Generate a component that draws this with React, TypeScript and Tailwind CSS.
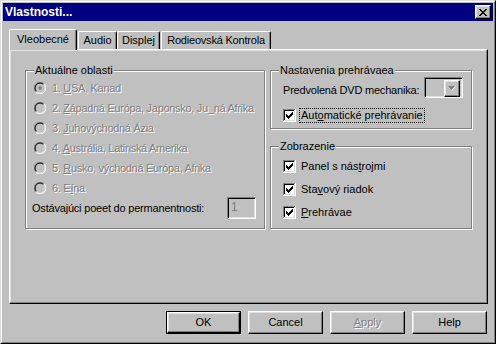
import React from "react";

const font = "font-['Liberation_Sans',Arial,sans-serif]";
const disabledText = "text-[#808080] [text-shadow:1px_1px_0_#fff]";
const raised =
  "border border-t-white border-l-white border-r-black border-b-black bg-[#c0c0c0] shadow-[inset_-1px_-1px_#808080,inset_1px_1px_#dfdfdf]";
const sunken =
  "border border-t-[#808080] border-l-[#808080] border-r-white border-b-white shadow-[inset_1px_1px_#000,inset_-1px_-1px_#dfdfdf]";

function Radio({ checked }: { checked?: boolean }) {
  return (
    <svg width="12" height="12" viewBox="0 0 12 12" className="shrink-0">
      <circle cx="6" cy="6" r="4.5" fill="#c0c0c0" />
      <path d="M1.8 10.2 A5.5 5.5 0 0 1 10.2 1.8" fill="none" stroke="#808080" strokeWidth="1" />
      <path d="M10.2 1.8 A5.5 5.5 0 0 1 1.8 10.2" fill="none" stroke="#fff" strokeWidth="1" />
      <path d="M2.5 9.5 A4.5 4.5 0 0 1 9.5 2.5" fill="none" stroke="#000" strokeWidth="1" />
      <path d="M9.5 2.5 A4.5 4.5 0 0 1 2.5 9.5" fill="none" stroke="#dfdfdf" strokeWidth="1" />
      {checked && <circle cx="6" cy="6" r="1.8" fill="#808080" />}
    </svg>
  );
}

function Check() {
  const cols: [number, number][] = [
    [3, 5], [4, 6], [5, 7], [6, 6], [7, 5], [8, 4], [9, 3],
  ];
  return (
    <svg width="13" height="13" viewBox="0 0 13 13" className="shrink-0" shapeRendering="crispEdges">
      <rect x="0" y="0" width="13" height="13" fill="#fff" />
      <rect x="0" y="0" width="12" height="1" fill="#808080" />
      <rect x="0" y="0" width="1" height="12" fill="#808080" />
      <rect x="1" y="1" width="10" height="1" fill="#000" />
      <rect x="1" y="1" width="1" height="10" fill="#000" />
      <rect x="1" y="11" width="11" height="1" fill="#dfdfdf" />
      <rect x="11" y="1" width="1" height="11" fill="#dfdfdf" />
      {cols.map(([x, y]) => (
        <rect key={x} x={x} y={y} width="1" height="3" fill="#000" />
      ))}
    </svg>
  );
}

function Group({ label, className, children }: { label: string; className: string; children?: React.ReactNode }) {
  return (
    <div className={`relative border border-[#808080] shadow-[1px_1px_0_#fff,inset_1px_1px_0_#fff] ${className}`}>
      <span className="absolute -top-[8px] left-[8px] bg-[#c0c0c0] px-[1px] leading-[14px]">{label}</span>
      {children}
    </div>
  );
}

const regions: [string, string, string][] = [
  ["1. ", "U", "SA, Kanad"],
  ["2. ", "Z", "ápadná Európa, Japonsko, Ju_ná Afrika"],
  ["3. ", "J", "uhovýchodná Ázia"],
  ["4. ", "A", "ustrália, Latinská Amerika"],
  ["5. ", "R", "usko, východná Európa, Afrika"],
  ["6. E", "í", "na"],
];

export default function App() {
  return (
    <div className={`${font} text-[11px] text-black whitespace-nowrap w-[496px] h-[344px] bg-[#c0c0c0] border border-t-[#dfdfdf] border-l-[#dfdfdf] border-r-black border-b-black`}>
      <div className="h-full border border-t-white border-l-white border-r-[#808080] border-b-[#808080] p-px">
        {/* title bar */}
        <div className="h-[18px] bg-[#000080] flex items-center justify-between pl-[2px] pr-[2px]">
          <span className="text-white font-bold text-[12px] leading-none">Vlastnosti...</span>
          <div className={`${raised} w-[16px] h-[14px] flex items-center justify-center`}>
            <svg width="8" height="7" viewBox="0 0 8 7" shapeRendering="crispEdges">
              {[0, 1, 2, 3, 4, 5, 6].map((i) => (
                <React.Fragment key={i}>
                  <rect x={i} y={i} width="2" height="1" fill="#000" />
                  <rect x={6 - i} y={i} width="2" height="1" fill="#000" />
                </React.Fragment>
              ))}
            </svg>
          </div>
        </div>

        {/* tabs */}
        <div className="mt-[8px] ml-[6px] flex items-end h-[20px]">
          <div className="relative z-10 -mb-px w-[68px] h-[21px] bg-[#c0c0c0] border-l border-t border-white border-r border-r-black rounded-t-[2px] shadow-[inset_-1px_0_#808080] flex items-center justify-center pb-[2px]">
            Vleobecné
          </div>
          <div className="ml-px w-[39px] h-[18px] border-l border-t border-white border-r border-r-black rounded-t-[2px] shadow-[inset_-1px_0_#808080] flex items-center justify-center">
            Audio
          </div>
          <div className="w-[43px] h-[18px] border-l border-t border-white border-r border-r-black rounded-t-[2px] shadow-[inset_-1px_0_#808080] flex items-center justify-center">
            Displej
          </div>
          <div className="ml-px w-[110px] h-[18px] border-l border-t border-white border-r border-r-black rounded-t-[2px] shadow-[inset_-1px_0_#808080] flex items-center justify-center tracking-[-0.2px]">
            Rodieovská Kontrola
          </div>
        </div>

        {/* panel */}
        <div className="ml-[6px] w-[479px] h-[255px] border border-t-white border-l-white border-r-black border-b-black shadow-[inset_-1px_-1px_#808080,inset_1px_1px_#dfdfdf] pt-[20px] pl-[15px] flex gap-[5px]">
          <Group label="Aktuálne oblasti" className="w-[240px] h-[159px] pt-[7px] pl-[8px] shrink-0">
            <div className="flex flex-col">
              {regions.map(([a, u, b], i) => (
                <div key={i} className="h-[20px] flex items-center gap-[6px]">
                  <Radio checked={i === 0} />
                  <span className={`${disabledText} tracking-[-0.3px]`}>
                    {a}
                    <span className="underline">{u}</span>
                    {b}
                  </span>
                </div>
              ))}
              <div className="-mt-px h-[22px] flex items-center -ml-[2px] pr-[8px]">
                <span className="tracking-[-0.2px]">Ostávajúci poeet do permanentnosti:</span>
                <div className={`${sunken} ml-auto shrink-0 w-[29px] h-[22px] pl-[3px] pt-[3px] leading-[13px] text-[#808080] text-[12px]`}>1</div>
              </div>
            </div>
          </Group>

          <div className="flex flex-col gap-[17px]">
            <Group label="Nastavenia prehrávaea" className="w-[202px] h-[59px] pt-[6px] pl-[12px] pr-[8px]">
              <div className="flex items-start">
                <span className="mt-[5px] tracking-[-0.2px]">Predvolená DVD mechanika:</span>
                <div className={`${sunken} ml-auto shrink-0 w-[39px] h-[21px] bg-[#c0c0c0] flex justify-end p-[2px]`}>
                  <div className={`${raised} w-[16px] h-[17px] flex items-center justify-center`}>
                    <svg width="8" height="5" viewBox="0 0 8 5">
                      <path d="M0 0 H7 L3.5 4 Z" fill="#808080" />
                      <path d="M4 4.5 L7.5 0.5" stroke="#fff" strokeWidth="1" />
                    </svg>
                  </div>
                </div>
              </div>
              <div className="mt-[9px] flex items-center gap-[3px]">
                <Check />
                <span className="border border-dotted border-black px-px leading-[13px]">
                  Aut<span className="underline">o</span>matické prehrávanie
                </span>
              </div>
            </Group>

            <Group label="Zobrazenie" className="w-[202px] h-[83px] pt-[13px] pl-[12px]">
              <div className="flex flex-col gap-[10px]">
                <div className="h-[13px] flex items-center gap-[5px]">
                  <Check />
                  <span>Panel s nás<span className="underline">t</span>rojmi</span>
                </div>
                <div className="h-[13px] flex items-center gap-[5px]">
                  <Check />
                  <span>Sta<span className="underline">v</span>ový riadok</span>
                </div>
                <div className="h-[13px] flex items-center gap-[5px]">
                  <Check />
                  <span><span className="underline">P</span>rehrávae</span>
                </div>
              </div>
            </Group>
          </div>
        </div>

        {/* buttons */}
        <div className="mt-[7px] flex justify-end gap-[7px] pr-[6px]">
          <div className="border border-black">
            <div className={`${raised} w-[73px] h-[21px] flex items-center justify-center`}>OK</div>
          </div>
          <div className={`${raised} w-[75px] h-[23px] flex items-center justify-center`}>Cancel</div>
          <div className={`${raised} w-[75px] h-[23px] flex items-center justify-center`}>
            <span className={disabledText}>
              <span className="underline">A</span>pply
            </span>
          </div>
          <div className={`${raised} w-[75px] h-[23px] flex items-center justify-center`}>Help</div>
        </div>
      </div>
    </div>
  );
}
